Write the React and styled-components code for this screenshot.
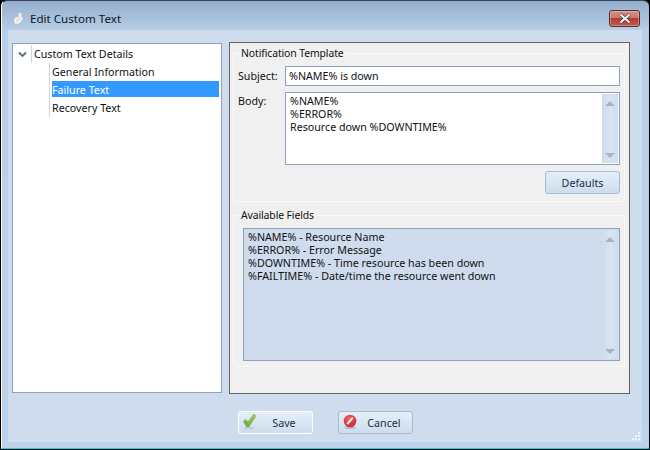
import styled, { createGlobalStyle } from 'styled-components';

const Global = createGlobalStyle`
  html, body {
    margin: 0;
    padding: 0;
    background: #000;
  }
  * {
    box-sizing: border-box;
  }
`

const Frame = styled.div`
  position: relative;
  width: 648px;
  height: 449px;
  display: flex;
  flex-direction: column;
  padding: 0 7px 6px 6px;
  border-radius: 6px 6px 0 0;
  border-top: 1px solid #3a4652;
  border-left: 1px solid #fff;
  border-bottom: 1px solid #18d4e8;
  margin-left: 1px;
  background: linear-gradient(#93aecd 0, #b7cfe8 30px, #bcd3eb 100%);
  font-family: "Noto Sans", "Open Sans", sans-serif;
  font-size: 10.7px;
  color: #111;
`

const TitleBar = styled.div`
  height: 29px;
  flex: none;
  display: flex;
  align-items: center;
  padding-top: 6px;
  margin-left: 3px;
  gap: 3px;
`

const Title = styled.span`
  flex: 1;
  font-size: 11.6px;
  color: #10141a;
`

const CloseButton = styled.button`
  width: 31px;
  height: 17px;
  margin: 0 2px 0 0;
  padding: 0;
  display: flex;
  align-items: center;
  justify-content: center;
  border: 1px solid #5a2a30;
  border-radius: 3px;
  background: linear-gradient(#d68d80 0, #c9786c 45%, #b33f2c 50%, #c05a48 100%);
  box-shadow: inset 0 0 0 1px rgba(255, 255, 255, 0.3);
`

const Client = styled.div`
  flex: 1;
  display: flex;
  flex-direction: column;
  background: #cfdcee;
  padding: 12px 12px 0 4px;
`

const Main = styled.div`
  display: flex;
  gap: 7px;
  height: 352px;
`

const TreePanel = styled.div`
  width: 210px;
  margin-top: 1px;
  height: 350px;
  background: #fff;
  border: 1px solid #8ba2c0;
  padding-top: 1px;
`

const TreeRoot = styled.div`
  height: 18px;
  display: flex;
  align-items: center;
`

const Chevron = styled.span`
  width: 18px;
  display: flex;
  justify-content: center;
`

const RootLabel = styled.span`
  border-left: 1px solid #c9d6e8;
  height: 18px;
  line-height: 18px;
  padding-left: 2px;
`

const TreeChildren = styled.div`
  margin-left: 36px;
  border-left: 1px solid #c9d6e8;
  padding-left: 2px;
  margin-right: 2px;
`

const TreeItem = styled.div`
  height: 18px;
  line-height: 19px;
  border-bottom: 2px solid transparent;
  background-clip: padding-box;
  color: ${p => (p.$selected ? '#fff' : '#111')};
  background-color: ${p => (p.$selected ? '#3399ff' : 'transparent')};
`

const SidePanel = styled.div`
  flex: 1;
  background: #f0f0f0;
  border: 1px solid #646464;
  padding: 5px 4px 0 3px;
  display: flex;
  flex-direction: column;
  gap: 8px;
`

const Group = styled.fieldset`
  margin: 0;
  padding: 0 4px 5px 4px;
  height: ${p => p.$height}px;
  border: 1px solid #fafafa;
  border-radius: 3px;
  min-width: 0;
`

const Legend = styled.legend`
  padding: 0 2px 0 0;
  margin-left: 3px;
  font-size: 10.4px;
  letter-spacing: -0.1px;
  line-height: 10px;
`

const FieldRow = styled.div`
  display: flex;
  margin-top: ${p => p.$top}px;
  padding-left: ${p => p.$inset || 0}px;
`

const FieldLabel = styled.label`
  width: 47px;
  flex: none;
  padding-top: ${p => p.$pad}px;
  line-height: 14px;
`

const SubjectInput = styled.div`
  flex: 1;
  height: 20px;
  border: 1px solid #8ba2c0;
  background: #fff;
  padding-left: 3px;
  line-height: 19px;
`

const TextBox = styled.div`
  flex: 1;
  height: ${p => p.$height}px;
  border: 1px solid #8ba2c0;
  background: ${p => p.$fill};
  display: flex;
  padding: 1px;
`

const BoxText = styled.div`
  flex: 1;
  padding: 1px 0 0 3px;
  line-height: 13px;
`

const ScrollBar = styled.div`
  width: 16px;
  display: flex;
  flex-direction: column;
  justify-content: space-between;
  align-items: center;
  padding: 7px 0 5px;
  background: linear-gradient(90deg, #cddbec, #d9e4f1 50%, #cfdcec);
`

const ArrowUp = styled.span`
  border: 5px solid transparent;
  border-top: 0;
  border-bottom: 5px solid #a3b4ca;
`

const ArrowDown = styled.span`
  border: 5px solid transparent;
  border-bottom: 0;
  border-top: 5px solid #a3b4ca;
`

const DefaultsRow = styled.div`
  display: flex;
  justify-content: flex-end;
  margin-top: 6px;
`

const WinButton = styled.button`
  width: ${p => p.$width}px;
  height: 23px;
  padding: 1px 0 0;
  display: flex;
  align-items: center;
  justify-content: center;
  position: relative;
  font-family: inherit;
  font-size: 10.7px;
  color: #1c2c4c;
  border: 1px solid ${p => (p.$focused ? '#fff' : '#a9bbd3')};
  border-radius: 3px;
  background: linear-gradient(#e6eff9, #cddded);
`

const ButtonIcon = styled.span`
  position: absolute;
  left: 3px;
  top: 1px;
  display: flex;
`

const ButtonLabel = styled.span`
  margin-left: 17px;
`

const Footer = styled.div`
  display: flex;
  padding-left: 226px;
  gap: 25px;
  margin-top: 17px;
`

const Grip = styled.svg`
  position: absolute;
  right: 8px;
  bottom: 7px;
`

function Scroll() {
  return (
    <ScrollBar>
      <ArrowUp />
      <ArrowDown />
    </ScrollBar>
  )
}

export default function App() {
  return (
    <>
      <Global />
      <Frame>
        <TitleBar>
          <svg width="16" height="18" viewBox="0 0 16 18">
            <path d="M7 3 L11.5 2.5 L10.5 6.5 L13 8 L9 14 L4 14.5 L2 11 L3.5 7 L7 6.5 Z" fill="#eceef1" stroke="#b4bbc4" strokeWidth="1" strokeLinejoin="round" />
            <path d="M5 11.5 L9 8" stroke="#c3c8cf" strokeWidth="1" />
          </svg>
          <Title>Edit Custom Text</Title>
          <CloseButton aria-label="Close">
            <svg width="14" height="11" viewBox="0 0 14 11">
              <path d="M2.5 1.5 L11.5 9.5 M11.5 1.5 L2.5 9.5" stroke="#3d3a44" strokeWidth="3.6" />
              <path d="M2.5 1.5 L11.5 9.5 M11.5 1.5 L2.5 9.5" stroke="#f1f3f6" strokeWidth="2.2" />
            </svg>
          </CloseButton>
        </TitleBar>
        <Client>
          <Main>
            <TreePanel>
              <TreeRoot>
                <Chevron>
                  <svg width="9" height="7" viewBox="0 0 9 7">
                    <path d="M1 1.5 L4.5 5 L8 1.5" fill="none" stroke="#5d6c7e" strokeWidth="1.8" />
                  </svg>
                </Chevron>
                <RootLabel>Custom Text Details</RootLabel>
              </TreeRoot>
              <TreeChildren>
                <TreeItem>General Information</TreeItem>
                <TreeItem $selected>Failure Text</TreeItem>
                <TreeItem>Recovery Text</TreeItem>
              </TreeChildren>
            </TreePanel>
            <SidePanel>
              <Group $height={154}>
                <Legend>Notification Template</Legend>
                <FieldRow $top={8}>
                  <FieldLabel htmlFor="subject" $pad={3}>Subject:</FieldLabel>
                  <SubjectInput id="subject">%NAME% is down</SubjectInput>
                </FieldRow>
                <FieldRow $top={6}>
                  <FieldLabel $pad={2}>Body:</FieldLabel>
                  <TextBox $height={73} $fill="#fff">
                    <BoxText>
                      %NAME%<br />
                      %ERROR%<br />
                      Resource down %DOWNTIME%
                    </BoxText>
                    <Scroll />
                  </TextBox>
                </FieldRow>
                <DefaultsRow>
                  <WinButton $width={75}>Defaults</WinButton>
                </DefaultsRow>
              </Group>
              <Group $height={157}>
                <Legend>Available Fields</Legend>
                <FieldRow $top={8} $inset={5}>
                  <TextBox $height={133} $fill="#cfdcee">
                    <BoxText>
                      %NAME% - Resource Name<br />
                      %ERROR% - Error Message<br />
                      %DOWNTIME% - Time resource has been down<br />
                      %FAILTIME% - Date/time the resource went down
                    </BoxText>
                    <Scroll />
                  </TextBox>
                </FieldRow>
              </Group>
            </SidePanel>
          </Main>
          <Footer>
            <WinButton $width={75} $focused>
              <ButtonIcon>
                <svg width="18" height="18" viewBox="0 0 18 18">
                  <defs>
                    <linearGradient id="checkFill" x1="0" y1="1" x2="1" y2="0">
                      <stop offset="0" stopColor="#6ea83e" />
                      <stop offset="1" stopColor="#9ccb6c" />
                    </linearGradient>
                  </defs>
                  <path d="M1 8.5 L3.8 6 L6 8.5 L11.5 0.8 L14.8 2.8 L7.2 14 L4.4 14 Z" fill="url(#checkFill)" />
                  <ellipse cx="7" cy="15" rx="5" ry="0.9" fill="#9aa6b4" opacity="0.45" />
                </svg>
              </ButtonIcon>
              <ButtonLabel>Save</ButtonLabel>
            </WinButton>
            <WinButton $width={75}>
              <ButtonIcon>
                <svg width="18" height="18" viewBox="0 0 18 18">
                  <defs>
                    <radialGradient id="cancelFill" cx="0.4" cy="0.3" r="0.8">
                      <stop offset="0" stopColor="#ee5f5f" />
                      <stop offset="1" stopColor="#c92530" />
                    </radialGradient>
                  </defs>
                  <ellipse cx="8" cy="14.5" rx="5.5" ry="1.5" fill="#8f929e" opacity="0.5" />
                  <circle cx="8" cy="8" r="6.3" fill="url(#cancelFill)" />
                  <path d="M5.2 11 L10.8 4.6" stroke="#fdf1f1" strokeWidth="2" />
                </svg>
              </ButtonIcon>
              <ButtonLabel>Cancel</ButtonLabel>
            </WinButton>
          </Footer>
        </Client>
        <Grip width="10" height="10" viewBox="0 0 10 10" fill="#f2f6fb">
          <rect x="7" y="1" width="2" height="2" />
          <rect x="4" y="4" width="2" height="2" />
          <rect x="7" y="4" width="2" height="2" />
          <rect x="1" y="7" width="2" height="2" />
          <rect x="4" y="7" width="2" height="2" />
          <rect x="7" y="7" width="2" height="2" />
        </Grip>
      </Frame>
    </>
  )
}
